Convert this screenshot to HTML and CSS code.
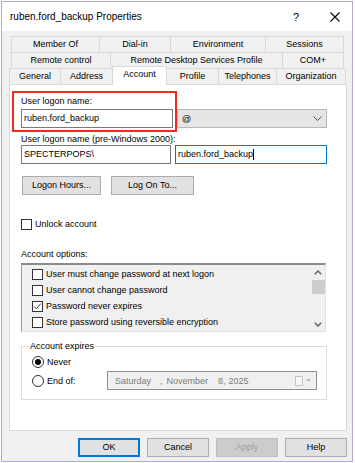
FILE: index.html
```html
<!DOCTYPE html>
<html lang="en">
<head>
    <meta charset="UTF-8">
    <title>ruben.ford_backup Properties</title>
    <link rel="stylesheet" href="styles.css">
</head>
<body>

<div class="window">
    <div class="titlebar">
        <span class="title">ruben.ford_backup Properties</span>
        <span class="help">?</span>
        <svg class="close" width="10" height="10" viewBox="0 0 10 10">
            <path d="M0.5 0.5 L9.5 9.5 M9.5 0.5 L0.5 9.5" stroke="#000" stroke-width="1.1" fill="none"/>
        </svg>
    </div>

    <div class="client">
        <div class="tabs">
            <div class="tab-row row-top">
                <div class="tab w89">Member Of</div>
                <div class="tab w72">Dial-in</div>
                <div class="tab w96">Environment</div>
                <div class="tab w79">Sessions</div>
            </div>
            <div class="tab-row row-top">
                <div class="tab w100">Remote control</div>
                <div class="tab w173">Remote Desktop Services Profile</div>
                <div class="tab w62">COM+</div>
            </div>
            <div class="tab-row row-front">
                <div class="tab w52">General</div>
                <div class="tab w53">Address</div>
                <div class="tab w55 selected">Account</div>
                <div class="tab w53">Profile</div>
                <div class="tab w59">Telephones</div>
                <div class="tab w70">Organization</div>
            </div>
        </div>

        <div class="panel">
            <div class="upn-row">
                <div class="highlight">
                    <div class="label">User logon name:</div>
                    <div class="textbox upn">ruben.ford_backup</div>
                </div>
                <div class="combo">
                    <span>@</span>
                    <svg width="9" height="5" viewBox="0 0 9 5">
                        <path d="M0.5 0.5 L4.5 4.5 L8.5 0.5" stroke="#555" stroke-width="1" fill="none"/>
                    </svg>
                </div>
            </div>

            <div class="label indent pre2000">User logon name (pre-Windows 2000):</div>
            <div class="field-row indent">
                <div class="textbox domain">SPECTERPOPS\</div>
                <div class="textbox sam focused">ruben.ford_backup<span class="caret"></span></div>
            </div>

            <div class="button-row">
                <div class="button hours">Logon Hours...</div>
                <div class="button logon-to">Log On To...</div>
            </div>

            <div class="check-row indent unlock">
                <span class="checkbox"></span>
                <span>Unlock account</span>
            </div>

            <div class="label indent options-label">Account options:</div>
            <div class="listbox indent">
                <div class="list-items">
                    <div class="list-item"><span class="checkbox"></span>User must change password at next logon</div>
                    <div class="list-item"><span class="checkbox"></span>User cannot change password</div>
                    <div class="list-item">
                        <span class="checkbox">
                            <svg width="9" height="9" viewBox="0 0 9 9">
                                <path d="M1.2 4.6 L3.4 6.8 L7.8 1.6" stroke="#333" stroke-width="1" fill="none"/>
                            </svg>
                        </span>Password never expires
                    </div>
                    <div class="list-item"><span class="checkbox"></span>Store password using reversible encryption</div>
                </div>
                <div class="scrollbar">
                    <div class="arrow">
                        <svg width="8" height="5" viewBox="0 0 8 5">
                            <path d="M0.8 4.2 L4 1 L7.2 4.2" stroke="#606060" stroke-width="1.4" fill="none"/>
                        </svg>
                    </div>
                    <div class="thumb"></div>
                    <div class="arrow bottom">
                        <svg width="8" height="5" viewBox="0 0 8 5">
                            <path d="M0.8 0.8 L4 4 L7.2 0.8" stroke="#606060" stroke-width="1.4" fill="none"/>
                        </svg>
                    </div>
                </div>
            </div>

            <fieldset class="expires indent">
                <legend>Account expires</legend>
                <div class="radio-row">
                    <span class="radio checked"></span>
                    <span>Never</span>
                </div>
                <div class="radio-row date-row">
                    <span class="radio"></span>
                    <span class="end-label">End of:</span>
                    <div class="datepicker">
                        <span class="day">Saturday</span>
                        <span class="comma">,</span>
                        <span class="month">November</span>
                        <span class="date">8,</span>
                        <span class="year">2025</span>
                        <span class="calendar"></span>
                        <svg class="drop" width="5" height="3" viewBox="0 0 5 3">
                            <path d="M0 0 L5 0 L2.5 3 Z" fill="#b8b8b8"/>
                        </svg>
                    </div>
                </div>
            </fieldset>
        </div>

        <div class="actions">
            <div class="button default">OK</div>
            <div class="button">Cancel</div>
            <div class="button disabled">Apply</div>
            <div class="button">Help</div>
        </div>
    </div>
</div>

</body>
</html>
```

FILE: styles.css
```css
body {
    margin: 0;
    background-color: #fff;
    font-family: 'Liberation Sans', Arial, sans-serif;
    font-size: 9px;
    color: #000;
}

.window {
    margin: 1px 0 0 1px;
    width: 352px;
    height: 461px;
    box-sizing: border-box;
    border: 1px solid #a9acd6;
    display: flex;
    flex-direction: column;
}

.titlebar {
    height: 29px;
    background-color: #fff;
    display: flex;
    align-items: center;
    padding: 0 12px 0 8px;
}

.title {
    flex: 1;
    font-size: 10px;
}

.help {
    font-size: 11px;
    margin-right: 31px;
}

.client {
    flex: 1;
    background-color: #f0f0f0;
    padding: 5px 5px 0 7px;
}

/* tabs */
.tab-row {
    display: flex;
    height: 16px;
}

.row-top {
    margin-left: 2px;
}

.row-front {
    align-items: flex-end;
}

.tab {
    height: 16px;
    box-sizing: border-box;
    border: 1px solid #d9d9d9;
    border-bottom: none;
    margin-right: -1px;
    text-align: center;
    line-height: 15px;
    white-space: nowrap;
}

.tab.selected {
    position: relative;
    z-index: 1;
    height: 19px;
    margin-top: -2px;
    margin-bottom: -1px;
    background-color: #fff;
    line-height: 14px;
}

.w52 { width: 52px; }
.w53 { width: 53px; }
.w55 { width: 55px; }
.w59 { width: 59px; }
.w62 { width: 62px; }
.w70 { width: 70px; }
.w72 { width: 72px; }
.w79 { width: 79px; }
.w89 { width: 89px; }
.w96 { width: 96px; }
.w100 { width: 100px; }
.w173 { width: 173px; }

/* panel */
.panel {
    height: 347px;
    box-sizing: border-box;
    border: 1px solid #d9d9d9;
    background-color: #fff;
}

.indent {
    margin-left: 11px;
}

.label {
    line-height: 12px;
}

.upn-row {
    display: flex;
    margin: 6px 0 0 2px;
}

.highlight {
    width: 165px;
    height: 41px;
    box-sizing: border-box;
    border: 2px solid #ef2b24;
    padding: 2px 0 0 7px;
}

.textbox {
    height: 19px;
    box-sizing: border-box;
    border: 1px solid #7a7a7a;
    background-color: #fff;
    padding-left: 2px;
    line-height: 17px;
    display: flex;
}

.upn {
    width: 152px;
    margin-top: 2px;
}

.combo {
    width: 150px;
    height: 19px;
    margin-top: 18px;
    box-sizing: border-box;
    border: 1px solid #b9b9b9;
    background-color: #e5e5e5;
    display: flex;
    align-items: center;
    justify-content: space-between;
    padding: 0 4px 0 4px;
}

.pre2000 {
    margin-top: 1px;
}

.field-row {
    display: flex;
    gap: 4px;
}

.domain {
    width: 150px;
}

.sam {
    width: 152px;
}

.focused {
    border-color: #0078d7;
}

.caret {
    width: 1px;
    height: 11px;
    margin-top: 3px;
    background-color: #000;
}

.button-row {
    display: flex;
    gap: 10px;
    margin: 12px 0 0 12px;
}

.button {
    height: 19px;
    box-sizing: border-box;
    border: 1px solid #adadad;
    background-color: #e1e1e1;
    text-align: center;
    line-height: 17px;
}

.hours {
    width: 79px;
}

.logon-to {
    width: 83px;
}

.check-row {
    display: flex;
    align-items: center;
    gap: 3px;
    height: 14px;
}

.unlock {
    margin-top: 22px;
}

.checkbox {
    width: 11px;
    height: 11px;
    box-sizing: border-box;
    border: 1px solid #333;
    background-color: #fff;
    display: inline-flex;
    align-items: center;
    justify-content: center;
    flex-shrink: 0;
}

.options-label {
    margin-top: 17px;
}

.listbox {
    width: 305px;
    height: 69px;
    margin-top: 3px;
    box-sizing: border-box;
    border-top: 2px solid #8a8a8a;
    border-left: 1px solid #a0a0a0;
    border-right: 1px solid #e3e3e3;
    border-bottom: 1px solid #e3e3e3;
    background-color: #f0f0f0;
    display: flex;
}

.list-items {
    flex: 1;
    padding: 1px 0 0 10px;
}

.list-item {
    height: 16px;
    display: flex;
    align-items: center;
    gap: 3px;
}

.scrollbar {
    width: 14px;
    display: flex;
    flex-direction: column;
    align-items: center;
}

.arrow {
    height: 14px;
    display: flex;
    align-items: center;
}

.arrow.bottom {
    margin-top: auto;
}

.thumb {
    width: 13px;
    height: 14px;
    margin-top: 1px;
    background-color: #cdcdcd;
}

/* account expires */
.expires {
    width: 306px;
    margin-top: 8px;
    margin-right: 0;
    box-sizing: border-box;
    border: 1px solid #dcdcdc;
    padding: 3px 0 9px 10px;
}

.expires legend {
    line-height: 12px;
    padding: 0 1px;
    margin-left: -3px;
}

.radio-row {
    display: flex;
    align-items: center;
    gap: 3px;
    height: 14px;
}

.date-row {
    height: 19px;
    margin-top: 2px;
}

.radio {
    width: 12px;
    height: 12px;
    box-sizing: border-box;
    border: 1px solid #333;
    border-radius: 50%;
    background-color: #fff;
    display: inline-flex;
    align-items: center;
    justify-content: center;
}

.radio.checked::after {
    content: '';
    width: 6px;
    height: 6px;
    border-radius: 50%;
    background-color: #000;
}

.end-label {
    width: 57px;
}

.datepicker {
    width: 210px;
    height: 19px;
    box-sizing: border-box;
    border: 1px solid #8f8f8f;
    background-color: #f0f0f0;
    color: #7a7a7a;
    display: flex;
    align-items: center;
    padding-left: 7px;
    white-space: nowrap;
}

.comma {
    margin-left: 9px;
}

.month {
    margin-left: 4px;
}

.date {
    margin-left: 10px;
}

.year {
    margin-left: 3px;
}

.calendar {
    width: 8px;
    height: 10px;
    margin-left: auto;
    box-sizing: border-box;
    border: 1px solid #c4c4c4;
    background-color: #f7f7f7;
}

.drop {
    margin: 0 5px 0 3px;
}

/* dialog buttons */
.actions {
    display: flex;
    justify-content: flex-end;
    gap: 7px;
    margin-top: 7px;
}

.actions .button {
    width: 62px;
}

.button.default {
    border-color: #0078d7;
    box-shadow: inset 0 0 0 1px #0078d7;
}

.button.disabled {
    background-color: #cccccc;
    border-color: #bfbfbf;
    color: #a0a0a0;
}
```
